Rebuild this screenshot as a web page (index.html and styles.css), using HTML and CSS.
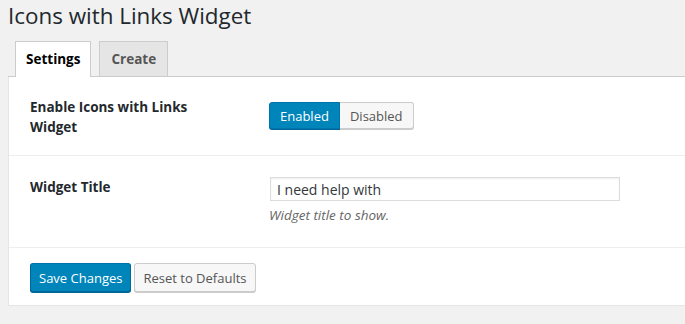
FILE: index.html
```html
<!DOCTYPE html>
<html>
<head>
    <title>Icons with Links Widget</title>
    <link rel="stylesheet" href="styles.css">
</head>
<body>
    <div class="wrap">
        <h1>Icons with Links Widget</h1>

        <div class="tabs">
            <a class="tab active">Settings</a>
            <a class="tab">Create</a>
        </div>

        <div class="panel">
            <div class="row">
                <div class="label">Enable Icons with Links Widget</div>
                <div class="field">
                    <div class="toggle">
                        <button class="toggle-btn on">Enabled</button>
                        <button class="toggle-btn">Disabled</button>
                    </div>
                </div>
            </div>

            <div class="row">
                <div class="label">Widget Title</div>
                <div class="field">
                    <input type="text" class="text-input" value="I need help with">
                    <p class="description">Widget title to show.</p>
                </div>
            </div>

            <div class="footer">
                <button class="btn primary">Save Changes</button>
                <button class="btn">Reset to Defaults</button>
            </div>
        </div>
    </div>
</body>
</html>
```

FILE: styles.css
```css
body {
    margin: 0;
    background-color: #f1f1f1;
    font-family: "Open Sans", "Noto Sans", sans-serif;
    font-size: 13px;
    color: #23282d;
}
.wrap {
    padding: 0 0 0 8px;
}
h1 {
    margin: 0;
    padding: 2px 0 0 0;
    font-size: 22.4px;
    font-weight: 400;
    line-height: 28px;
    color: #23282d;
}
.tabs {
    display: flex;
    gap: 8px;
    margin-top: 11px;
    padding-left: 7px;
    border-bottom: 1px solid #ccc;
    height: 35px;
}
.tab {
    display: block;
    padding: 0 11px;
    line-height: 34px;
    font-size: 13.5px;
    font-weight: 700;
    color: #555;
    background-color: #e5e5e5;
    border: 1px solid #ccc;
    border-bottom: none;
}
.tab.active {
    color: #000;
    background-color: #fff;
    height: 35px;
    padding: 0 10px;
}
.panel {
    background-color: #fff;
    border-left: 1px solid #e5e5e5;
    border-bottom: 1px solid #e5e5e5;
    padding-left: 21px;
}
.row {
    display: flex;
    border-bottom: 1px solid #eee;
    margin-left: -21px;
    padding-left: 21px;
}
.row:first-child {
    height: 78px;
}
.row + .row {
    height: 91px;
}
.label {
    width: 189px;
    padding: 20px 50px 0 0;
    font-size: 13.5px;
    font-weight: 700;
    line-height: 20px;
    color: #23282d;
}
.field {
    padding-top: 25px;
}
.row + .row .label {
    padding-top: 21px;
}
.row + .row .field {
    padding-top: 21px;
}
.toggle {
    display: flex;
}
.toggle-btn {
    height: 27px;
    padding: 0 10px;
    font-family: inherit;
    font-size: 13px;
    color: #555;
    background-color: #f7f7f7;
    border: 1px solid #ccc;
    border-left: none;
    border-radius: 0 3px 3px 0;
    box-shadow: 0 1px 0 #ccc;
}
.toggle-btn.on {
    color: #fff;
    background-color: #0085ba;
    border: 1px solid #0073aa;
    border-radius: 3px 0 0 3px;
    box-shadow: 0 1px 0 #006799;
}
.text-input {
    width: 350px;
    height: 24px;
    box-sizing: border-box;
    margin: 0 0 0 1px;
    padding: 0 6px;
    font-family: inherit;
    font-size: 14px;
    color: #32373c;
    border: 1px solid #ddd;
    box-shadow: inset 0 1px 2px rgba(0,0,0,0.07);
}
.description {
    margin: 5px 0 0 0;
    font-style: italic;
    font-size: 13.5px;
    color: #666;
}
.footer {
    display: flex;
    gap: 3px;
    padding: 15px 0 13px 0;
}
.btn {
    height: 29px;
    padding: 0 8px;
    font-family: inherit;
    font-size: 13px;
    color: #555;
    background-color: #f7f7f7;
    border: 1px solid #ccc;
    border-radius: 3px;
    box-shadow: 0 1px 0 #ccc;
}
.btn.primary {
    color: #fff;
    background-color: #0085ba;
    border-color: #0073aa #006799 #006799;
    box-shadow: 0 1px 0 #006799;
}
```
